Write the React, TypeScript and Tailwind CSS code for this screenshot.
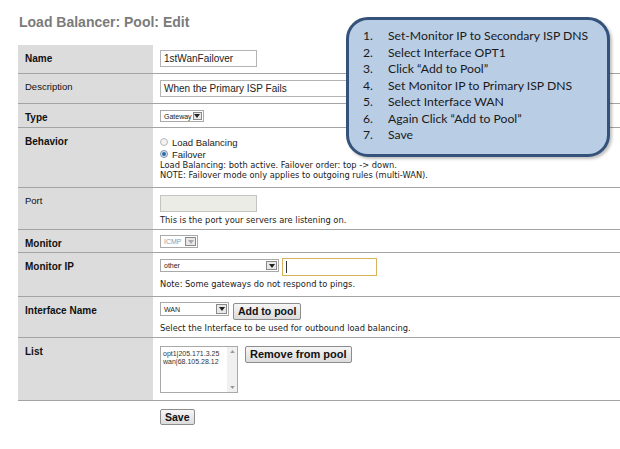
import React from 'react';

const Sel: React.FC<{ label: string; w: string; h?: string; small?: boolean; disabled?: boolean }> = ({ label, w, h = 'h-[14px]', small, disabled }) => (
  <div className={`flex items-stretch border border-[#a9a9a9] bg-white ${w} ${h}`}>
    <span className={`flex-1 pl-[3px] leading-none flex items-center ${small ? 'text-[7px]' : 'text-[8px]'} ${disabled ? 'text-[#999]' : 'text-[#222]'}`}>
      {label}
    </span>
    <span className="w-[11px] m-[1px] border border-[#8a8a8a] bg-[#e8e8e8] flex items-center justify-center">
      <svg width="6" height="4" viewBox="0 0 6 4">
        <path d="M0 0h6L3 4z" fill={disabled ? '#aaa' : '#222'} />
      </svg>
    </span>
  </div>
);

const Btn: React.FC<{ children: React.ReactNode; cls?: string }> = ({ children, cls = '' }) => (
  <button className={`border border-[#8d8d8d] rounded-[2px] bg-gradient-to-b from-[#f6f6f6] to-[#dcdcdc] font-bold text-[#111] leading-none px-[4px] ${cls}`}>
    {children}
  </button>
);

const Radio: React.FC<{ checked?: boolean; label: string }> = ({ checked, label }) => (
  <div className="flex items-center gap-[4px] h-[12px]">
    <span className={`w-[8px] h-[8px] rounded-full border flex items-center justify-center ${checked ? 'border-[#7d93a8] bg-[#dfe9f2]' : 'border-[#b8b8b8] bg-[#f2f2f2]'}`}>
      {checked && <span className="w-[4px] h-[4px] rounded-full bg-[#2b6aa8]" />}
    </span>
    <span className="text-[9.5px] text-[#222]">{label}</span>
  </div>
);

// small help text under a field (Tahoma-ish width)
const Note: React.FC<{ children: React.ReactNode; cls?: string }> = ({ children, cls = '' }) => (
  <div className={`font-['DejaVu_Sans',Verdana,sans-serif] text-[8.3px] leading-[10px] ${cls}`}>{children}</div>
);

const Row: React.FC<{ label: string; bold?: boolean; h: string; children?: React.ReactNode }> = ({ label, bold, h, children }) => (
  <div className={`flex border-b border-[#a4a4a4] ${h}`}>
    <div className={`w-[135px] shrink-0 bg-[#dcdcdc] pl-[7px] pt-[6px] text-[#111] ${bold ? 'font-bold text-[10px]' : 'text-[9.5px]'}`}>
      {label}
    </div>
    <div className="flex-1 pl-[7px] pt-[5px] text-[9px] text-[#222] leading-[11px]">{children}</div>
  </div>
);

const steps = [
  'Set-Monitor IP to Secondary ISP DNS',
  'Select Interface OPT1',
  'Click \u201cAdd to Pool\u201d',
  'Set Monitor IP to Primary ISP DNS',
  'Select Interface WAN',
  'Again Click \u201cAdd to Pool\u201d',
  'Save',
];

const App: React.FC = () => {
  return (
    <div className="relative w-[620px] h-[449px] overflow-hidden bg-white font-['Liberation_Sans',Arial,sans-serif]">
      <h1 className="pl-[19px] pt-[12px] h-[45px] text-[14px] font-bold text-[#7b7b7b]">
        Load Balancer: Pool: Edit
      </h1>

      <div className="ml-[18px]">
        <Row label="Name" bold h="h-[29px]">
          <div className="w-[97px] h-[17px] border border-[#b4b4b4] text-[10px] pl-[3px] flex items-center">1stWanFailover</div>
        </Row>
        <Row label="Description" h="h-[30px]">
          <div className="mt-[1px] w-[260px] h-[17px] border border-[#b4b4b4] text-[10px] pl-[3px] flex items-center">When the Primary ISP Fails</div>
        </Row>
        <Row label="Type" bold h="h-[24px]">
          <div className="pt-[1px]">
            <Sel label="Gateway" w="w-[44px]" h="h-[12px]" small />
          </div>
        </Row>
        <Row label="Behavior" bold h="h-[60px]">
          <div className="pt-[3px]">
            <Radio label="Load Balancing" />
            <Radio checked label="Failover" />
            <Note>Load Balancing: both active. Failover order: top -&gt; down.</Note>
            <Note>NOTE: Failover mode only applies to outgoing rules (multi-WAN).</Note>
          </div>
        </Row>
        <Row label="Port" h="h-[42px]">
          <div className="mt-[2px] w-[97px] h-[17px] border border-[#c4c4c0] bg-[#ecece6]" />
          <Note cls="mt-[3px]">This is the port your servers are listening on.</Note>
        </Row>
        <Row label="Monitor" bold h="h-[23px]">
          <Sel label="ICMP" w="w-[38px]" h="h-[13px]" small disabled />
        </Row>
        <Row label="Monitor IP" bold h="h-[44px]">
          <div className="flex items-start gap-[3px]">
            <div className="mt-[1px]">
              <Sel label="other" w="w-[119px]" h="h-[13px]" small />
            </div>
            <div className="w-[95px] h-[18px] border border-[#d9b25e] bg-white flex items-center pl-[3px]">
              <span className="w-px h-[12px] bg-[#333]" />
            </div>
          </div>
          <Note cls="mt-[3px]">Note: Some gateways do not respond to pings.</Note>
        </Row>
        <Row label="Interface Name" bold h="h-[41px]">
          <div className="flex items-start gap-[4px]">
            <Sel label="WAN" w="w-[69px]" h="h-[14px]" small />
            <Btn cls="h-[17px] mt-[1px] text-[10.5px]">Add to pool</Btn>
          </div>
          <Note cls="mt-[3px]">Select the Interface to be used for outbound load balancing.</Note>
        </Row>
        <Row label="List" bold h="h-[63px]">
          <div className="flex items-start gap-[7px] pt-[3px]">
            <div className="w-[78px] h-[47px] border border-[#a9a9a9] flex">
              <div className="flex-1 pl-[2px] pt-[3px] text-[7px] leading-[8px] text-[#333]">
                <div>opt1|205.171.3.25</div>
                <div>wan|68.105.28.12</div>
              </div>
              <div className="w-[10px] bg-[#f0f0f0] flex flex-col justify-between items-center py-[3px]">
                <svg width="5" height="3" viewBox="0 0 6 4"><path d="M0 4h6L3 0z" fill="#999" /></svg>
                <svg width="5" height="3" viewBox="0 0 6 4"><path d="M0 0h6L3 4z" fill="#999" /></svg>
              </div>
            </div>
            <Btn cls="h-[17px] text-[11px]">Remove from pool</Btn>
          </div>
        </Row>
        <div className="flex pl-[142px] pt-[8px]">
          <Btn cls="h-[16px] text-[10.5px]">Save</Btn>
        </div>
      </div>

      <div className="absolute left-[346px] top-[17px] w-[264px] h-[140px] rounded-[22px] border-[3px] border-[#34527a] bg-[#b9cde5] shadow-[2px_2px_3px_rgba(0,0,0,0.25)] pl-[14px] pt-[8px] font-['Lato','Open_Sans',sans-serif] text-[12.2px] text-[#1a1a1a]">
        <ol>
          {steps.map((s, i) => (
            <li key={i} className="flex h-[16.5px] items-center">
              <span className="w-[25px]">{i + 1}.</span>
              <span>{s}</span>
            </li>
          ))}
        </ol>
      </div>
    </div>
  );
};

export default App;
